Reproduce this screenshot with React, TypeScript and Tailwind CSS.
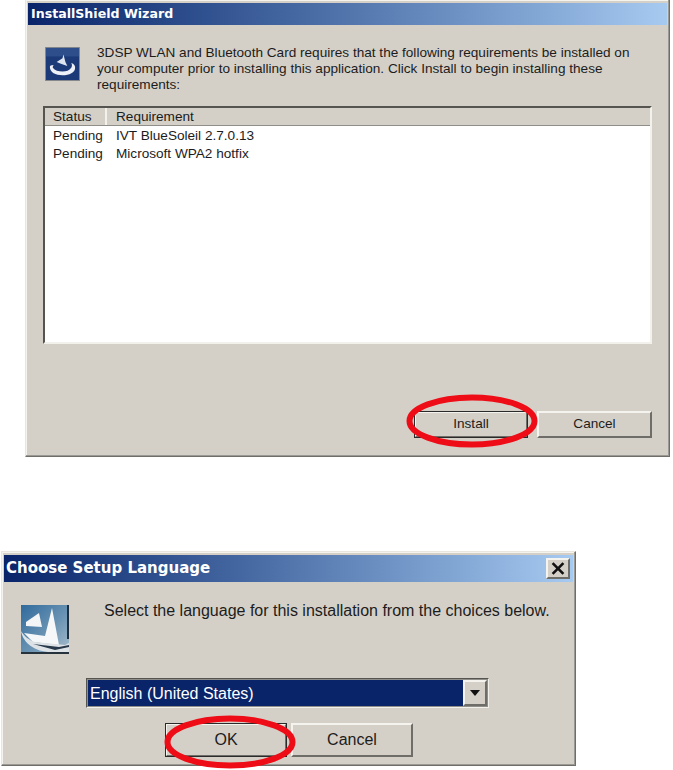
const frame = "border border-[#e8e6df] border-r-[#6f6e69] border-b-[#6f6e69] shadow-[inset_-1px_-1px_0_#9a9994,inset_1px_1px_0_#f4f3ee]";
const btn = "flex items-center justify-center bg-[#d4d0c8] border-2 border-t-[#f4f3ee] border-l-[#f4f3ee] border-r-[#6e6d68] border-b-[#6e6d68] text-[#1c1c1c]";

function Ring({ className }: { className: string }) {
  return (
    <svg className={"absolute pointer-events-none " + className} viewBox="0 0 132 54" fill="none">
      <ellipse cx="66" cy="27" rx="62.5" ry="23.5" stroke="#ee0d16" strokeWidth="6" />
    </svg>
  );
}

function WizardIcon() {
  return (
    <svg className="w-[35px] h-[34px] shrink-0" viewBox="0 0 36 36" preserveAspectRatio="none">
      <rect width="36" height="36" fill="#8d8d8c" />
      <rect x="1" y="1" width="34" height="34" fill="#1c3a78" />
      <rect x="1" y="1" width="34" height="9" fill="#2e4d8b" />
      <path d="M5 21c0 6 6 9 13 9s13-3 13-8c0-2-1-4-4-5 1 2 1 3 0 5-2 3-5 4-9 4s-8-1-10-4c0-1 0-2 1-3-3 0-4 1-4 2z" fill="#eef1f7" />
      <path d="M12 16l6-4 1-4 2 8 2 4-6-2z" fill="#dfe5f0" />
    </svg>
  );
}

function SetupIcon() {
  return (
    <svg className="w-[48px] h-[49px] shrink-0" viewBox="0 0 48 49">
      <defs>
        <linearGradient id="sky" x1="0" y1="0" x2="1" y2="1">
          <stop offset="0" stopColor="#2f6a9c" />
          <stop offset="0.55" stopColor="#6a93b3" />
          <stop offset="1" stopColor="#a9bfce" />
        </linearGradient>
      </defs>
      <rect width="48" height="49" fill="url(#sky)" />
      <rect x="46" y="0" width="2" height="34" fill="#1d2f40" />
      <path d="M5 17l13-9 3 14-16-1z" fill="#f3f5f6" />
      <path d="M3 28l21 3 7-28 7 37-26-3z" fill="#f6f7f8" />
      <path d="M0 26c2 12 14 21 30 21h18v-9l-4 2-30-3C8 35 3 31 0 26z" fill="#dde2e6" />
      <path d="M12 39l26 3 10-2v2l-14 3z" fill="#27384a" />
      <rect y="47" width="48" height="2" fill="#26323c" />
    </svg>
  );
}

export default function App() {
  return (
    <div className="w-[673px] h-[770px] bg-white overflow-hidden font-['Liberation_Sans',sans-serif] text-[#1c1c1c]">
      <div className={"ml-[25px] w-[645px] h-[457px] pt-[3px] px-[2px] bg-[#d4d0c8] flex flex-col border-t-0 " + frame}>
        <div className="h-[22px] flex items-center pl-[3px] bg-gradient-to-r from-[#0a246a] to-[#a6caf0]">
          <span className="font-['DejaVu_Sans',sans-serif] font-bold text-[12.6px] text-white">InstallShield Wizard</span>
        </div>
        <div className="flex gap-[17px] pl-[17px] pt-[22px]">
          <WizardIcon />
          <p className="text-[13.6px] leading-[16px] -mt-[2px] w-[542px]">
            3DSP WLAN and Bluetooth Card requires that the following requirements be installed on your computer prior to installing this application. Click Install to begin installing these requirements:
          </p>
        </div>
        <div className="mt-[13px] ml-[15px] w-[609px] h-[238px] bg-white border-2 border-t-[#55544f] border-l-[#55544f] border-r-[#f2f1ec] border-b-[#f2f1ec] text-[13.6px] leading-[18px]">
          <div className="h-[18px] flex bg-[#d4d0c8] border-b border-[#8f8e89]">
            <div className="w-[62px] pl-[8px] border-r-2 border-r-[#f2f1ec] leading-[18px]">Status</div>
            <div className="pl-[9px] leading-[18px]">Requirement</div>
          </div>
          <div className="flex pl-[8px] pt-[1px]">
            <span className="w-[63px]">Pending</span>
            <span>IVT BlueSoleil 2.7.0.13</span>
          </div>
          <div className="flex pl-[8px]">
            <span className="w-[63px]">Pending</span>
            <span>Microsoft WPA2 hotfix</span>
          </div>
        </div>
        <div className="relative flex justify-end gap-[9px] pr-[15px] mt-[67px] text-[13.6px]">
          <div className={"w-[114px] h-[27px] outline outline-1 -outline-offset-1 outline-[#2a2a2a] " + btn}>Install</div>
          <div className={"w-[115px] h-[27px] " + btn}>Cancel</div>
          <Ring className="left-[378px] -top-[17px] w-[132px] h-[54px]" />
        </div>
      </div>

      <div className={"mt-[94px] ml-[1px] w-[575px] h-[215px] pt-[3px] px-[2px] bg-[#d4d0c8] flex flex-col " + frame}>
        <div className="h-[27px] flex items-center justify-between pl-[2px] pr-[3px] bg-gradient-to-r from-[#0a246a] to-[#a6caf0]">
          <span className="font-['DejaVu_Sans',sans-serif] font-bold text-[15px] text-white">Choose Setup Language</span>
          <div className={"w-[24px] h-[21px] " + btn}>
            <svg className="w-[14px] h-[13px]" viewBox="0 0 13 12"><path d="M1.5 1l10 10M11.5 1l-10 10" stroke="#111" strokeWidth="2.4" /></svg>
          </div>
        </div>
        <div className="flex pl-[17px] pt-[23px]">
          <SetupIcon />
          <p className="ml-[35px] -mt-[4px] text-[16px] leading-[20px]">Select the language for this installation from the choices below.</p>
        </div>
        <div className="mt-[24px] ml-[82px] w-[403px] h-[30px] flex bg-[#0a246a] border-2 border-t-[#55544f] border-l-[#55544f] border-r-[#f2f1ec] border-b-[#f2f1ec] outline outline-1 -outline-offset-2 outline-[#8f8e89]">
          <span className="flex-1 pl-[2px] pt-[3px] text-white text-[16px] leading-[22px]">English (United States)</span>
          <div className={"w-[24px] " + btn}>
            <svg className="w-[10px] h-[6px]" viewBox="0 0 10 6"><path d="M0 0h10L5 6z" fill="#111" /></svg>
          </div>
        </div>
        <div className="relative flex gap-[4px] ml-[161px] mt-[15px] text-[16px]">
          <div className={"w-[122px] h-[34px] outline outline-1 -outline-offset-1 outline-[#2a2a2a] " + btn}>OK</div>
          <div className={"w-[122px] h-[34px] " + btn}>Cancel</div>
          <Ring className="-left-[1px] -top-[8px] w-[132px] h-[54px]" />
        </div>
      </div>
    </div>
  );
}
